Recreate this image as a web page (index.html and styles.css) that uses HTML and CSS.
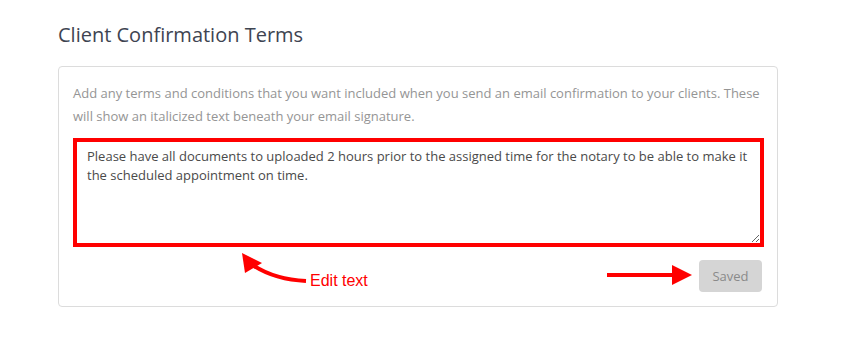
FILE: index.html
```html
<!DOCTYPE html>
<html lang="en">
<head>
    <meta charset="UTF-8">
    <meta name="viewport" content="width=device-width, initial-scale=1.0">
    <title>Client Confirmation Terms</title>
    <link rel="stylesheet" href="styles.css">
</head>
<body>

    <div class="page">
        <h2 class="section-title">Client Confirmation Terms</h2>
        <div class="terms-card">
            <p class="terms-help">Add any terms and conditions that you want included when you send an email confirmation to your clients. These will show an italicized text beneath your email signature.</p>
            <textarea class="terms-input" name="terms">Please have all documents to uploaded 2 hours prior to the assigned time for the notary to be able to make it the scheduled appointment on time.</textarea>
            <div class="terms-actions">
                <button type="button" class="save-btn" disabled>Saved</button>
            </div>
        </div>
    </div>

    <!-- annotation overlay -->
    <svg class="annotations" width="845" height="348" viewBox="0 0 845 348">
        <path d="M306 281 C 285 280, 268 275, 254 266" fill="none" stroke="#ff0000" stroke-width="4"/>
        <polygon points="242,253 262,263 245,273" fill="#ff0000"/>
        <rect x="607" y="273" width="67" height="4" fill="#ff0000"/>
        <polygon points="672,265 692,275 672,285" fill="#ff0000"/>
    </svg>
    <span class="edit-note">Edit text</span>

</body>
</html>
```

FILE: styles.css
```css
body {
    margin: 0;
    padding: 0;
    background-color: #fff;
    font-family: "Open Sans", sans-serif;
    position: relative;
    width: 845px;
    height: 348px;
    overflow: hidden;
}

.page {
    padding: 21px 0 0 58px;
}

.section-title {
    margin: 0 0 17px 0;
    font-size: 20px;
    font-weight: 400;
    line-height: 28px;
    color: #3e4451;
}

.terms-card {
    width: 720px;
    box-sizing: border-box;
    border: 1px solid #dcdcdc;
    border-radius: 4px;
    padding: 15px 13px 14px 14px;
}

.terms-help {
    margin: 0 0 10px 0;
    font-size: 13px;
    line-height: 23px;
    color: #959595;
}

/* red highlight around the field */
.terms-input {
    display: block;
    width: 100%;
    height: 109px;
    box-sizing: border-box;
    margin: 0;
    padding: 5px 10px;
    border: 4px solid #ff0000;
    border-radius: 0;
    font-family: "Open Sans", sans-serif;
    font-size: 13px;
    line-height: 19px;
    color: #4a4a4a;
    resize: vertical;
    outline: none;
}

.terms-actions {
    display: flex;
    justify-content: flex-end;
    margin-top: 13px;
    padding-right: 2px;
}

.save-btn {
    width: 63px;
    height: 32px;
    padding: 0;
    border: none;
    border-radius: 4px;
    background-color: #d5d5d5;
    color: #8a8a8a;
    font-family: "Open Sans", sans-serif;
    font-size: 13px;
}

.annotations {
    position: absolute;
    left: 0;
    top: 0;
    pointer-events: none;
}

.edit-note {
    position: absolute;
    left: 310px;
    top: 271px;
    font-family: "Liberation Sans", Arial, sans-serif;
    font-size: 16px;
    line-height: 20px;
    color: #ff0000;
}
```
